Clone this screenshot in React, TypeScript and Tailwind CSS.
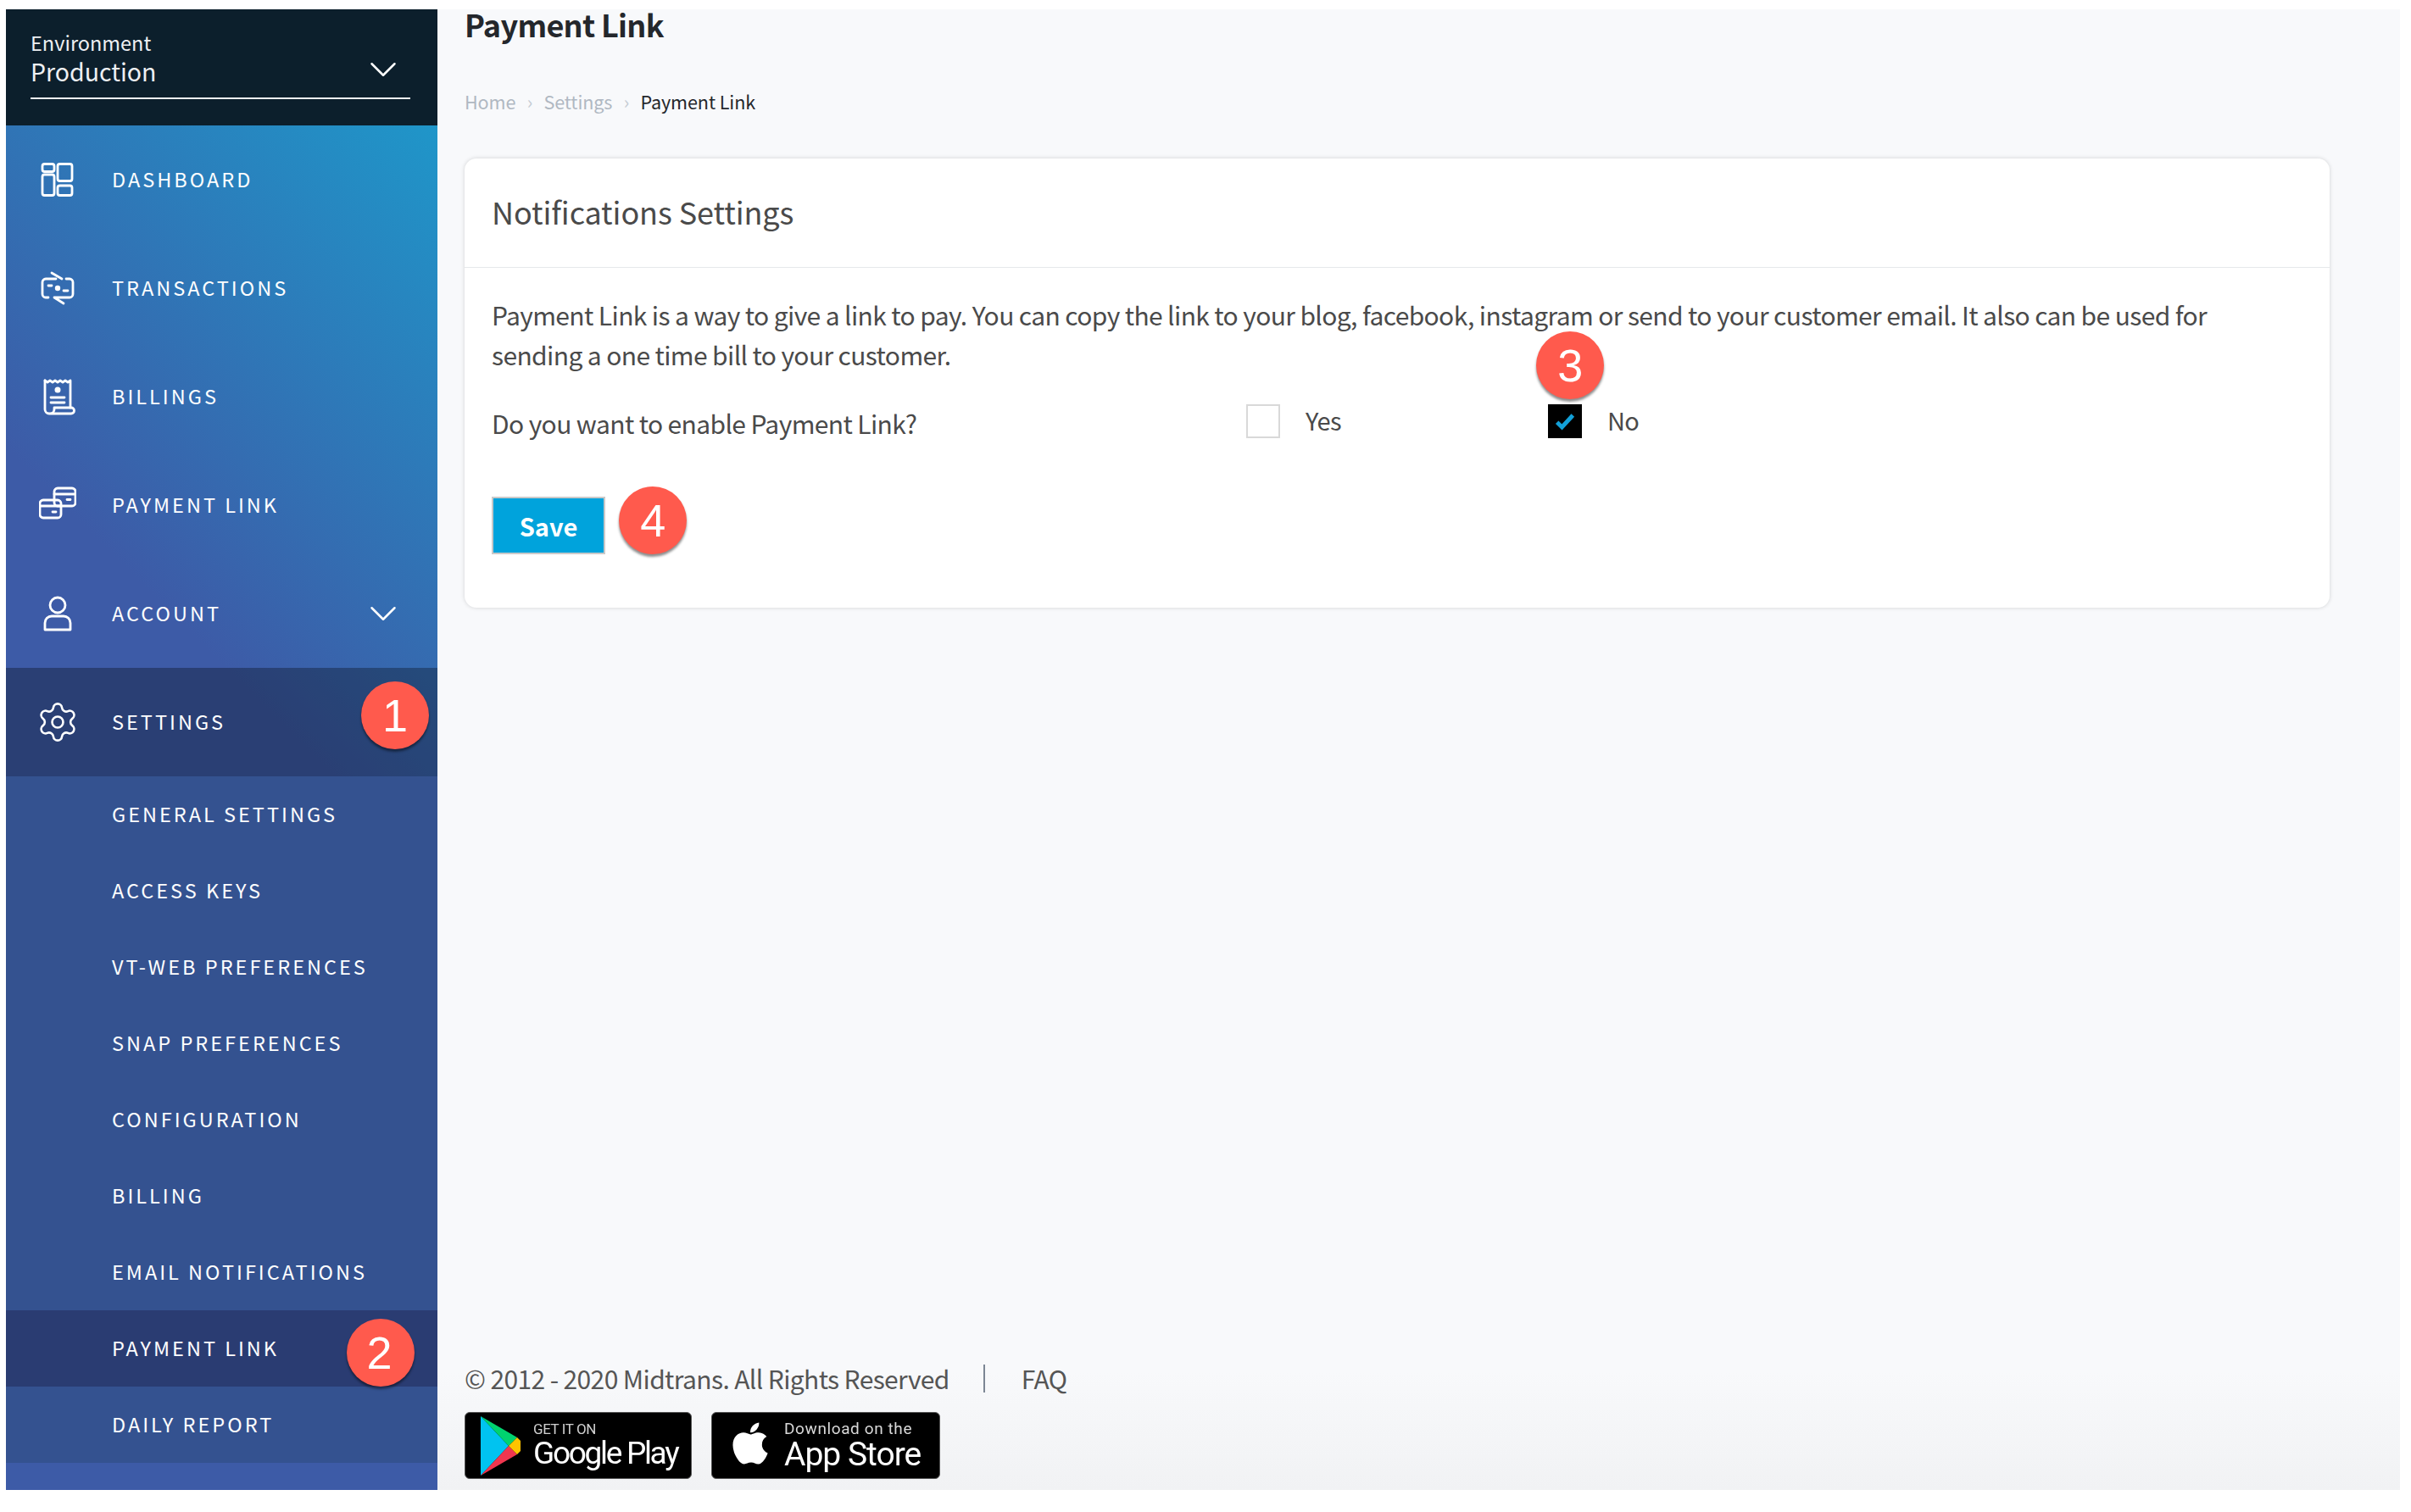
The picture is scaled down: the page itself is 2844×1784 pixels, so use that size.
import { ChevronDown, Settings } from "lucide-react";
import { FaApple } from "react-icons/fa";
import type { ReactNode } from "react";

const FONT = "font-['Noto_Sans_CJK_SC','Noto_Sans',sans-serif]";

function Badge({ n, className }: { n: number; className: string }) {
  return (
    <span
      className={`absolute flex h-[80px] w-[80px] items-center justify-center rounded-full bg-[#ff5a4d] font-['Liberation_Sans',sans-serif] text-[54px] leading-none text-white shadow-[0_3px_3px_rgba(0,0,0,0.45)] ${className}`}
    >
      {n}
    </span>
  );
}

function IconBox({ children }: { children: ReactNode }) {
  return (
    <svg
      viewBox="0 0 44 44"
      width="44"
      height="44"
      fill="none"
      stroke="currentColor"
      strokeWidth="2.8"
      strokeLinecap="round"
      strokeLinejoin="round"
    >
      {children}
    </svg>
  );
}

const DashboardIcon = () => (
  <IconBox>
    <rect x="4" y="3.5" width="14" height="9" rx="2.5" />
    <rect x="4" y="16" width="14" height="24.5" rx="2.5" />
    <rect x="22" y="3.5" width="17" height="20" rx="2.5" />
    <rect x="22" y="29" width="17" height="11.5" rx="2.5" />
  </IconBox>
);

const TransactionsIcon = () => (
  <IconBox>
    <path d="M20 11H8a4 4 0 0 0-4 4v14a4 4 0 0 0 4 4h3" />
    <path d="M15 4l12 7" />
    <path d="M32 11h4a4 4 0 0 1 4 4v14a4 4 0 0 1-4 4H18l11 7" />
    <path d="M11 19h4M29 25h5" />
    <circle cx="22" cy="22" r="3.2" fill="currentColor" stroke="none" />
  </IconBox>
);

const BillingsIcon = () => (
  <IconBox>
    <path d="M7 3v34a5 5 0 0 0 5 5h26a3 3 0 0 0 0-7H18v2a5 5 0 0 1-5 5" />
    <path d="M37 35V3l-3 2-3-2-3 2-3-2-3 2-3-2-3 2-3-2-3 2-3-2" />
    <circle cx="22" cy="14" r="3.5" fill="currentColor" stroke="none" />
    <path d="M14 23h16M14 29h16" />
  </IconBox>
);

const PaymentIcon = () => (
  <IconBox>
    <rect x="18" y="2" width="25" height="21" rx="4" />
    <path d="M18 9h25M33 15.5h4" />
    <rect x="1" y="16" width="25" height="21" rx="4" />
    <path d="M1 23h25M16 30h4" />
  </IconBox>
);

const AccountIcon = () => (
  <IconBox>
    <circle cx="22" cy="12" r="9" />
    <path d="M7 41v-8a8 8 0 0 1 8-8h14a8 8 0 0 1 8 8v8z" />
  </IconBox>
);

type MenuRowProps = { icon: ReactNode; label: string; chevron?: boolean };

function MenuRow({ icon, label, chevron }: MenuRowProps) {
  return (
    <div className="flex h-[128px] items-center pl-[39px] pr-[46px]">
      <span className="flex w-[44px] justify-center">{icon}</span>
      <span className="ml-[42px] text-[23.5px] tracking-[3px] text-white">{label}</span>
      {chevron && <ChevronDown className="ml-auto -mr-[9px] h-[54px] w-[54px]" strokeWidth={1.1} />}
    </div>
  );
}

const subItems = [
  "GENERAL SETTINGS",
  "ACCESS KEYS",
  "VT-WEB PREFERENCES",
  "SNAP PREFERENCES",
  "CONFIGURATION",
  "BILLING",
  "EMAIL NOTIFICATIONS",
];

function Sidebar() {
  return (
    <aside className="flex w-[509px] shrink-0 flex-col text-white">
      <div className="h-[137px] bg-[#0c1f2c] pl-[29px] pr-[32px] pt-[22px]">
        <div className="relative h-[84px] border-b-2 border-[#f2f4f7]">
          <div className="text-[23.5px] leading-[34px] text-[#eef0f3]">Environment</div>
          <div className="-mt-[1px] text-[28.5px] leading-[36px] text-[#eef0f3]">Production</div>
          <ChevronDown className="absolute right-[5px] top-[22px] h-[54px] w-[54px]" strokeWidth={1.1} />
        </div>
      </div>
      <div className="flex-1 bg-[linear-gradient(45deg,#3d5ba7_58%,#1f96c9_100%)] text-white">
        <MenuRow icon={<DashboardIcon />} label="DASHBOARD" />
        <MenuRow icon={<TransactionsIcon />} label="TRANSACTIONS" />
        <MenuRow icon={<BillingsIcon />} label="BILLINGS" />
        <MenuRow icon={<PaymentIcon />} label="PAYMENT LINK" />
        <MenuRow icon={<AccountIcon />} label="ACCOUNT" chevron />
        <div className="relative bg-black/30">
          <MenuRow icon={<Settings className="h-[52px] w-[52px] shrink-0" strokeWidth={1.2} />} label="SETTINGS" />
          <Badge n={1} className="left-[419px] top-[16px]" />
        </div>
        <div className="bg-[#345290]">
          {subItems.map((item) => (
            <div key={item} className="flex h-[90px] items-center pl-[125px] text-[23.5px] tracking-[3px]">
              {item}
            </div>
          ))}
          <div className="relative flex h-[90px] items-center bg-[#2a3c72] pl-[125px] text-[23.5px] tracking-[3px]">
            PAYMENT LINK
            <Badge n={2} className="left-[402px] top-[10px]" />
          </div>
          <div className="flex h-[90px] items-center pl-[125px] text-[23.5px] tracking-[3px]">DAILY REPORT</div>
        </div>
      </div>
    </aside>
  );
}

function GooglePlayBadge() {
  return (
    <div className="flex h-[79px] w-[268px] items-center rounded-[6px] border border-[#555] bg-black pl-[17px] text-white blur-[0.4px]">
      <svg viewBox="0 0 48 76" width="48" height="76">
        <path d="M1 3v70l33-35z" fill="#00c3f0" />
        <path d="M1 3l33 35 10-10z" fill="#00d36f" />
        <path d="M1 73l33-35 10 10z" fill="#f0364f" />
        <path d="M34 38l10-10 4 4v12l-4 4z" fill="#ffc400" />
      </svg>
      <div className="ml-[15px] flex flex-col">
        <span className="font-['Roboto',sans-serif] text-[17px] leading-[18px] tracking-[-0.4px] text-[#d0d0d0]">GET IT ON</span>
        <span className="font-['Roboto',sans-serif] text-[37px] leading-[40px] tracking-[-2.3px]">Google Play</span>
      </div>
    </div>
  );
}

function AppStoreBadge() {
  return (
    <div className="flex h-[79px] w-[270px] items-center rounded-[6px] border border-[#555] bg-black pl-[21px] text-white blur-[0.4px]">
      <FaApple className="mb-[6px] h-[56px] w-[48px]" />
      <div className="ml-[16px] flex flex-col">
        <span className="font-['Roboto',sans-serif] text-[19px] leading-[20px] tracking-[0.6px] text-[#d8d8d8]">Download on the</span>
        <span className="font-['Roboto',sans-serif] text-[39px] leading-[40px] tracking-[-1px]">App Store</span>
      </div>
    </div>
  );
}

function Card() {
  return (
    <section className="mr-[83px] mt-[50px] h-[530px] rounded-[14px] bg-white shadow-[0_0_5px_rgba(0,0,0,0.16)]">
      <div className="flex h-[129px] items-center border-b border-[#e6e8eb] px-[32px] pb-[5px] text-[36px] tracking-[-0.1px] text-[#4a4a4a]">
        Notifications Settings
      </div>
      <div className="px-[32px] pt-[32px] text-[30px] leading-[47px] tracking-[-0.62px] text-[#4a4a4a]">
        <p>
          Payment Link is a way to give a link to pay. You can copy the link to your blog, facebook, instagram or send
          to your customer email. It also can be used for
          <br />
          sending a one time bill to your customer.
        </p>
        <div className="relative mt-[32px] flex h-[50px] items-center">
          <span className="w-[890px]">Do you want to enable Payment Link?</span>
          <span className="h-[40px] w-[40px] -translate-y-[2px] border-2 border-[#d9d9d9] bg-white" />
          <span className="ml-[30px] w-[286px] -translate-y-[4px] text-[29px]">Yes</span>
          <span className="flex h-[40px] w-[40px] -translate-y-[2px] items-center justify-center bg-black">
            <svg viewBox="0 0 24 24" width="28" height="28" fill="none" stroke="#12a0d8" strokeWidth="4.2">
              <path d="M4 13l5 5L20 6" />
            </svg>
          </span>
          <span className="ml-[30px] -translate-y-[4px] text-[29px]">No</span>
          <Badge n={3} className="left-[1232px] -top-[83px]" />
        </div>
        <div className="relative mt-[62px]">
          <button className="h-[68px] w-[134px] border-2 border-[#c9c9c9] bg-[#00a3dc] text-[29px] font-bold tracking-[0px] text-white">
            Save
          </button>
          <Badge n={4} className="left-[150px] -top-[12px]" />
        </div>
      </div>
    </section>
  );
}

export default function App() {
  return (
    <div className={`flex h-[1784px] bg-white pb-[26px] pl-[7px] pr-[13px] pt-[11px] ${FONT}`}>
      <Sidebar />
      <main className="flex flex-1 flex-col bg-[linear-gradient(to_bottom,#f8f9fb_92%,#f1f2f4_100%)] pl-[32px]">
        <h1 className="-mt-[4px] text-[36px] font-semibold leading-[42px] tracking-[-0.7px] text-[#24272c]">Payment Link</h1>
        <nav className="mt-[54px] flex h-[34px] items-center text-[21.6px] tracking-[-0.1px]">
          <span className="text-[#b0b8c2]">Home</span>
          <span className="w-[33px] text-center text-[#c5cbd3]">›</span>
          <span className="text-[#b0b8c2]">Settings</span>
          <span className="w-[33px] text-center text-[#c5cbd3]">›</span>
          <span className="text-[#24272c]">Payment Link</span>
        </nav>
        <Card />
        <footer className="mt-auto pb-[13px]">
          <div className="flex h-[40px] items-center text-[30px] tracking-[-0.62px] text-[#555]">
            <span>© 2012 - 2020 Midtrans. All Rights Reserved</span>
            <span className="ml-[40px] h-[33px] w-[2px] bg-[#7c8694]" />
            <span className="ml-[43px]">FAQ</span>
          </div>
          <div className="mt-[20px] flex gap-[23px]">
            <GooglePlayBadge />
            <AppStoreBadge />
          </div>
        </footer>
      </main>
    </div>
  );
}
